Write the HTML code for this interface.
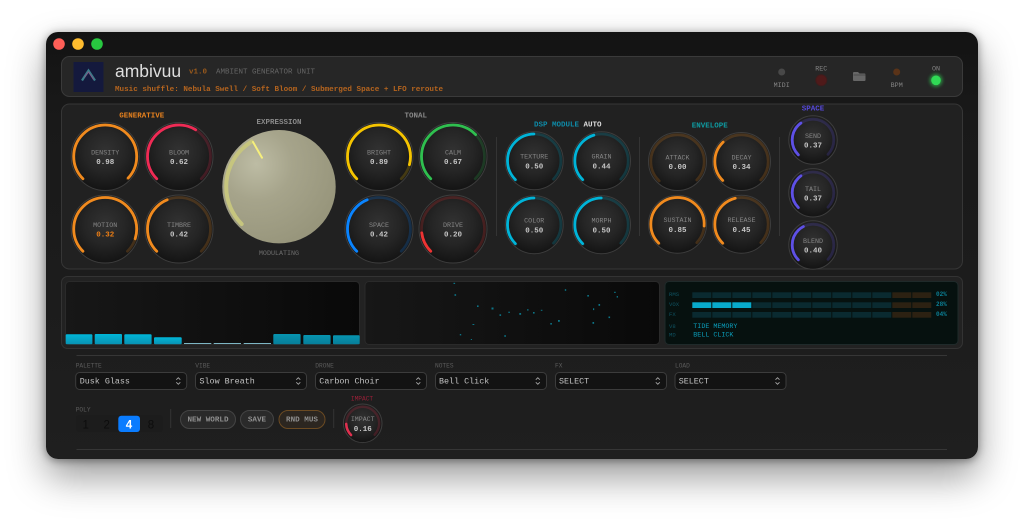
<!DOCTYPE html>
<html><head><meta charset="utf-8"><title>ambivuu</title>
<style>
html,body{margin:0;padding:0;background:#fff;width:1024px;height:520px;overflow:hidden}
#w{position:absolute;left:46px;top:32px;width:932px;height:427px;border-radius:12px;background:linear-gradient(#131313,#191919 20%,#1f1f1f);box-shadow:0 18px 38px rgba(0,0,0,.4),0 2px 8px rgba(0,0,0,.3),0 0 12px rgba(0,0,0,.12)}
svg{position:absolute;left:0;top:0;filter:blur(.35px)}
text{font-family:"Liberation Mono",monospace}
.l{font-size:6.7px;fill:#858585;text-anchor:middle}
.v{font-size:7.5px;fill:#c6c6c6;text-anchor:middle;font-weight:bold}
.h{font-size:7.5px;text-anchor:middle;font-weight:bold}
.t{fill:none;stroke-width:2.8;opacity:.2;stroke-dasharray:270 90;transform:rotate(135deg);stroke-linecap:round}
.a{fill:none;stroke-width:2.8;stroke-linecap:round;transform:rotate(135deg)}
.d{fill:url(#kg);stroke:#3d3d3d;stroke-width:1}
.sl{font-size:6.2px;fill:#5c5c5c}
.s{fill:#131313;stroke:#3c3c3c;stroke-width:1}
.st{font-size:8.4px;fill:#c4c4c4}
.c{fill:none;stroke:#a8a8a8;stroke-width:.9}
.sg{fill:#0a2a30}.so{fill:#2c2112}.sb{fill:#08aacb}
.ml{font-size:5.6px;fill:#0f5362}
.mp{font-size:6px;fill:#0b7f95;font-weight:bold}
.b{fill:#2a2a2a;stroke:#444;stroke-width:1}
.bt{font-size:7.6px;fill:#909090;text-anchor:middle;font-weight:bold}
.n{font-family:"Liberation Sans",sans-serif;font-size:11.5px;fill:#0d0d0d;text-anchor:middle}
.dot{fill:#0c7486}
</style></head><body>
<div id="w"></div>
<svg width="1024" height="520" viewBox="0 0 1024 520" xmlns="http://www.w3.org/2000/svg">
<defs>
<radialGradient id="kg" cx=".5" cy=".42" r=".56"><stop offset="0" stop-color="#323232"/><stop offset=".55" stop-color="#252525"/><stop offset="1" stop-color="#151515"/></radialGradient>
<radialGradient id="bk" cx=".3" cy=".3" r=".8"><stop offset="0" stop-color="#bdbca4"/><stop offset=".4" stop-color="#a6a48b"/><stop offset="1" stop-color="#96947a"/></radialGradient>
<linearGradient id="vg" x1="0" x2="1"><stop offset="0" stop-color="#171717"/><stop offset="1" stop-color="#090909"/></linearGradient>
<linearGradient id="bar" x1="0" x2="0" y1="0" y2="1"><stop offset="0" stop-color="#00b6d8"/><stop offset="1" stop-color="#0992b2"/></linearGradient>
<linearGradient id="bar2" x1="0" x2="0" y1="0" y2="1"><stop offset="0" stop-color="#0794b0"/><stop offset="1" stop-color="#077e99"/></linearGradient>
<filter id="gl" x="-100%" y="-100%" width="300%" height="300%"><feGaussianBlur stdDeviation="1.6"/></filter>
</defs>

<!-- traffic lights -->
<circle cx="59" cy="44" r="5.8" fill="#ff5f57"/><circle cx="78" cy="44" r="5.8" fill="#febc2e"/><circle cx="97" cy="44" r="5.8" fill="#28c840"/>

<!-- header -->
<rect x="61.5" y="56.5" width="901" height="40" rx="8" fill="#262626" stroke="#3a3a3a"/>
<rect x="73.5" y="62" width="30" height="30" fill="#14193d"/>
<path d="M82 80.5L88.5 70.5L95 80.5" fill="none" stroke="#3b7d8a" stroke-width="2.2"/>
<path d="M84.5 77.5L88.5 72L93.5 79.5" fill="none" stroke="#7f5a86" stroke-width="1"/>
<text x="115" y="77" style="font-family:'Liberation Sans',sans-serif;font-size:17.5px" fill="#dedede">ambivuu</text>
<text x="189" y="73.5" font-size="7.5" font-weight="bold" fill="#9a5a1c">v1.0</text>
<text x="216" y="73.5" font-size="7.5" fill="#666">AMBIENT GENERATOR UNIT</text>
<text x="115" y="91" font-size="7.6" font-weight="bold" fill="#b5641e">Music shuffle: Nebula Swell / Soft Bloom / Submerged Space + LFO reroute</text>
<circle cx="781.7" cy="72" r="3.5" fill="#484848"/><text class="l" x="781.7" y="87">MIDI</text>
<text class="l" x="821.3" y="70.5">REC</text><circle cx="821.3" cy="80.3" r="5.5" fill="#4f1a1a" stroke="#3f1c1c"/>
<path d="M853 73a1 1 0 0 1 1-1h4l1.5 1.5h5a1 1 0 0 1 1 1V80a1 1 0 0 1-1 1H854a1 1 0 0 1-1-1z" fill="#666"/><path d="M853.5 75h12" stroke="#3e3e3e" stroke-width=".7"/>
<circle cx="896.7" cy="72" r="3.5" fill="#5a3318"/><text class="l" x="896.7" y="87">BPM</text>
<text class="l" x="936" y="70.5">ON</text><circle cx="936" cy="80.3" r="6.5" fill="#2fdc55" opacity=".55" filter="url(#gl)"/><circle cx="936" cy="80.3" r="4.8" fill="#30d955"/>

<!-- main panel -->
<rect x="61.5" y="104" width="901" height="165" rx="8" fill="#212121" stroke="#363636"/>
<text class="h" x="141.7" y="117.5" fill="#e8821e">GENERATIVE</text>
<text class="h" x="279" y="124" fill="#8a8a8a">EXPRESSION</text>
<text class="l" x="279" y="255" style="fill:#6d6d6d">MODULATING</text>
<text class="h" x="415.8" y="117.5" fill="#888">TONAL</text>
<text x="534" y="126.5" font-size="7.5" font-weight="bold" fill="#0e8ba8">DSP MODULE <tspan fill="#dcdcdc">AUTO</tspan></text>
<text class="h" x="709.7" y="127.5" fill="#0e9aa0">ENVELOPE</text>
<text class="h" x="813" y="110.7" fill="#5548d8">SPACE</text>
<path d="M496.5 137V236M639.5 137V236M779.5 137V236" stroke="#343434"/>

<!-- generative -->
<g transform="translate(105.2,156.5)" stroke="#f08a1e"><circle class="d" r="34"/><circle class="t" r="31.5" pathLength="360" stroke="#f08a1e"/><circle class="a" r="31.5" pathLength="360" stroke-dasharray="268 360"/><text class="l" y="-2.2" stroke="none">DENSITY</text><text class="v" y="7.6" stroke="none">0.98</text></g>
<g transform="translate(179,156.5)" stroke="#ef2b55"><circle class="d" r="34"/><circle class="t" r="31.5" pathLength="360" stroke="#ef2b55"/><circle class="a" r="31.5" pathLength="360" stroke-dasharray="167 360"/><text class="l" y="-2.2" stroke="none">BLOOM</text><text class="v" y="7.6" stroke="none">0.62</text></g>
<g transform="translate(105.2,229)" stroke="#f08a1e"><circle class="d" r="34"/><circle class="t" r="31.5" pathLength="360" stroke="#f08a1e"/><circle class="a" r="31.5" pathLength="360" stroke-dasharray="243 360"/><text class="l" y="-2.2" stroke="none">MOTION</text><text class="v" y="7.6" stroke="none" style="fill:#ef7f14">0.32</text></g>
<g transform="translate(179,229)" stroke="#f08a1e"><circle class="d" r="34"/><circle class="t" r="31.5" pathLength="360" stroke="#f08a1e"/><circle class="a" r="31.5" pathLength="360" stroke-dasharray="113 360"/><text class="l" y="-2.2" stroke="none">TIMBRE</text><text class="v" y="7.6" stroke="none">0.42</text></g>

<!-- expression -->
<circle cx="279" cy="186.7" r="56.7" fill="url(#bk)"/>
<circle cx="279" cy="186.7" r="52.8" fill="none" stroke="#c6c57e" stroke-width="4" pathLength="360" stroke-dasharray="104 360" stroke-linecap="round" transform="rotate(135 279 186.7)"/>
<path d="M253 142L262 157.7" stroke="#f6ef7c" stroke-width="2" stroke-linecap="round"/>

<!-- tonal -->
<g transform="translate(379,156.5)" stroke="#f5c400"><circle class="d" r="34"/><circle class="t" r="31.5" pathLength="360" stroke="#f5c400"/><circle class="a" r="31.5" pathLength="360" stroke-dasharray="240 360"/><text class="l" y="-2.2" stroke="none">BRIGHT</text><text class="v" y="7.6" stroke="none">0.89</text></g>
<g transform="translate(453,156.5)" stroke="#2fbf4f"><circle class="d" r="34"/><circle class="t" r="31.5" pathLength="360" stroke="#2fbf4f"/><circle class="a" r="31.5" pathLength="360" stroke-dasharray="181 360"/><text class="l" y="-2.2" stroke="none">CALM</text><text class="v" y="7.6" stroke="none">0.67</text></g>
<g transform="translate(379,229)" stroke="#0a84ff"><circle class="d" r="34"/><circle class="t" r="31.5" pathLength="360" stroke="#0a84ff"/><circle class="a" r="31.5" pathLength="360" stroke-dasharray="113 360"/><text class="l" y="-2.2" stroke="none">SPACE</text><text class="v" y="7.6" stroke="none">0.42</text></g>
<g transform="translate(453,229)" stroke="#ee3333"><circle class="d" r="34"/><circle class="t" r="31.5" pathLength="360" stroke="#ee3333"/><circle class="a" r="31.5" pathLength="360" stroke-dasharray="38 360"/><text class="l" y="-2.2" stroke="none">DRIVE</text><text class="v" y="7.6" stroke="none">0.20</text></g>

<!-- dsp -->
<g transform="translate(534.2,160.7)" stroke="#00b4d8"><circle class="d" r="29"/><circle class="t" r="26.7" pathLength="360" stroke="#00b4d8"/><circle class="a" r="26.7" pathLength="360" stroke-dasharray="135 360"/><text class="l" y="-2" stroke="none">TEXTURE</text><text class="v" y="7.6" stroke="none">0.50</text></g>
<g transform="translate(601.5,160.7)" stroke="#00b4d8"><circle class="d" r="29"/><circle class="t" r="26.7" pathLength="360" stroke="#00b4d8"/><circle class="a" r="26.7" pathLength="360" stroke-dasharray="119 360"/><text class="l" y="-2" stroke="none">GRAIN</text><text class="v" y="7.6" stroke="none">0.44</text></g>
<g transform="translate(534.2,224.7)" stroke="#00b4d8"><circle class="d" r="29"/><circle class="t" r="26.7" pathLength="360" stroke="#00b4d8"/><circle class="a" r="26.7" pathLength="360" stroke-dasharray="135 360"/><text class="l" y="-2" stroke="none">COLOR</text><text class="v" y="7.6" stroke="none">0.50</text></g>
<g transform="translate(601.5,224.7)" stroke="#00b4d8"><circle class="d" r="29"/><circle class="t" r="26.7" pathLength="360" stroke="#00b4d8"/><circle class="a" r="26.7" pathLength="360" stroke-dasharray="135 360"/><text class="l" y="-2" stroke="none">MORPH</text><text class="v" y="7.6" stroke="none">0.50</text></g>

<!-- envelope -->
<g transform="translate(677.5,161.5)" stroke="#f08a1e"><circle class="d" r="29"/><circle class="t" r="26.7" pathLength="360" stroke="#f08a1e"/><text class="l" y="-2" stroke="none">ATTACK</text><text class="v" y="7.6" stroke="none">0.00</text></g>
<g transform="translate(741.5,161.5)" stroke="#f08a1e"><circle class="d" r="29"/><circle class="t" r="26.7" pathLength="360" stroke="#f08a1e"/><circle class="a" r="26.7" pathLength="360" stroke-dasharray="92 360"/><text class="l" y="-2" stroke="none">DECAY</text><text class="v" y="7.6" stroke="none">0.34</text></g>
<g transform="translate(677.5,224.2)" stroke="#f08a1e"><circle class="d" r="29"/><circle class="t" r="26.7" pathLength="360" stroke="#f08a1e"/><circle class="a" r="26.7" pathLength="360" stroke-dasharray="230 360"/><text class="l" y="-2" stroke="none">SUSTAIN</text><text class="v" y="7.6" stroke="none">0.85</text></g>
<g transform="translate(741.5,224.2)" stroke="#f08a1e"><circle class="d" r="29"/><circle class="t" r="26.7" pathLength="360" stroke="#f08a1e"/><circle class="a" r="26.7" pathLength="360" stroke-dasharray="122 360"/><text class="l" y="-2" stroke="none">RELEASE</text><text class="v" y="7.6" stroke="none">0.45</text></g>

<!-- space -->
<g transform="translate(813,140)" stroke="#5e50e6"><circle class="d" r="24.2"/><circle class="t" r="20.8" pathLength="360" stroke="#5e50e6"/><circle class="a" r="20.8" pathLength="360" stroke-dasharray="100 360"/><text class="l" y="-2" stroke="none">SEND</text><text class="v" y="7.6" stroke="none">0.37</text></g>
<g transform="translate(813,192.8)" stroke="#5e50e6"><circle class="d" r="24.2"/><circle class="t" r="20.8" pathLength="360" stroke="#5e50e6"/><circle class="a" r="20.8" pathLength="360" stroke-dasharray="100 360"/><text class="l" y="-2" stroke="none">TAIL</text><text class="v" y="7.6" stroke="none">0.37</text></g>
<g transform="translate(813,245)" stroke="#5e50e6"><circle class="d" r="24.2"/><circle class="t" r="20.8" pathLength="360" stroke="#5e50e6"/><circle class="a" r="20.8" pathLength="360" stroke-dasharray="108 360"/><text class="l" y="-2" stroke="none">BLEND</text><text class="v" y="7.6" stroke="none">0.40</text></g>

<!-- viz frame -->
<rect x="61.5" y="276.5" width="901" height="72" rx="6" fill="#222" stroke="#333"/>
<rect x="65.5" y="281.5" width="294" height="63" rx="4" fill="url(#vg)" stroke="#2a2a2a"/>
<g fill="url(#bar)"><rect x="65.7" y="334.3" width="26.7" height="10" rx="1"/><rect x="94.7" y="334" width="27.3" height="10.3" rx="1"/><rect x="124.3" y="334.3" width="27.3" height="10" rx="1"/><rect x="154" y="337.3" width="27.7" height="7" rx="1"/></g>
<g fill="#7db6c4"><rect x="184" y="343" width="27.3" height="1"/><rect x="213.7" y="343" width="27.3" height="1"/><rect x="243.7" y="343" width="27.3" height="1"/></g>
<g fill="url(#bar2)"><rect x="273.3" y="334" width="27.3" height="10.3" rx="1"/><rect x="303.3" y="335" width="27.3" height="9.3" rx="1"/><rect x="333" y="335.3" width="26.7" height="9" rx="1"/></g>

<rect x="365" y="281.5" width="294.5" height="63" rx="4" fill="url(#vg)" stroke="#2a2a2a"/>
<g class="dot">
<rect x="453.5" y="282.8" width="1.6" height="1.2"/><rect x="454.5" y="294.2" width="1.6" height="1.6"/><rect x="477" y="305.4" width="1.6" height="1.6"/><rect x="491.5" y="307.5" width="2" height="2"/><rect x="499.5" y="314.3" width="1.6" height="1.6"/><rect x="508.3" y="311.7" width="1.6" height="1.2"/><rect x="519.3" y="313" width="1.8" height="1.8"/><rect x="527" y="309.3" width="1.6" height="1.2"/><rect x="533" y="312" width="1.6" height="1.6"/><rect x="540.8" y="309.8" width="1.6" height="1"/><rect x="550.3" y="323" width="1.6" height="1.6"/><rect x="558" y="320" width="1.8" height="1.8"/><rect x="564.8" y="289.2" width="1.4" height="1.6"/><rect x="587.3" y="295" width="1.6" height="1.6"/><rect x="593" y="308.3" width="1.2" height="1.8"/><rect x="598.5" y="304" width="1.6" height="1.8"/><rect x="608.5" y="316.5" width="1.6" height="1.6"/><rect x="614" y="291.8" width="1.8" height="1"/><rect x="616.7" y="296" width="1.2" height="1.6"/><rect x="592.5" y="322" width="1.6" height="1.8"/><rect x="472.5" y="324" width="1.8" height="1"/><rect x="459.8" y="334" width="1.4" height="1.4"/><rect x="470.8" y="339" width="1.2" height="1"/><rect x="504.3" y="335.2" width="1.6" height="1.6"/>
</g>

<rect x="665" y="281.5" width="293" height="63" rx="4" fill="#06110f" stroke="#1f2a2a"/>
<text class="ml" x="669" y="296">RMS</text><text class="ml" x="669" y="306">VOX</text><text class="ml" x="669" y="316">FX</text>
<g class="sg">
<rect x="692.3" y="292.3" width="19" height="5.7"/><rect x="712.3" y="292.3" width="19" height="5.7"/><rect x="732.3" y="292.3" width="19" height="5.7"/><rect x="752.3" y="292.3" width="19" height="5.7"/><rect x="772.3" y="292.3" width="19" height="5.7"/><rect x="792.3" y="292.3" width="19" height="5.7"/><rect x="812.3" y="292.3" width="19" height="5.7"/><rect x="832.3" y="292.3" width="19" height="5.7"/><rect x="852.3" y="292.3" width="19" height="5.7"/><rect x="872.3" y="292.3" width="19" height="5.7"/>
<rect x="752.3" y="302.3" width="19" height="5.7"/><rect x="772.3" y="302.3" width="19" height="5.7"/><rect x="792.3" y="302.3" width="19" height="5.7"/><rect x="812.3" y="302.3" width="19" height="5.7"/><rect x="832.3" y="302.3" width="19" height="5.7"/><rect x="852.3" y="302.3" width="19" height="5.7"/><rect x="872.3" y="302.3" width="19" height="5.7"/>
<rect x="692.3" y="312" width="19" height="5.7"/><rect x="712.3" y="312" width="19" height="5.7"/><rect x="732.3" y="312" width="19" height="5.7"/><rect x="752.3" y="312" width="19" height="5.7"/><rect x="772.3" y="312" width="19" height="5.7"/><rect x="792.3" y="312" width="19" height="5.7"/><rect x="812.3" y="312" width="19" height="5.7"/><rect x="832.3" y="312" width="19" height="5.7"/><rect x="852.3" y="312" width="19" height="5.7"/><rect x="872.3" y="312" width="19" height="5.7"/>
</g>
<g class="so"><rect x="892.3" y="292.3" width="19" height="5.7"/><rect x="912.3" y="292.3" width="19" height="5.7"/><rect x="892.3" y="302.3" width="19" height="5.7"/><rect x="912.3" y="302.3" width="19" height="5.7"/><rect x="892.3" y="312" width="19" height="5.7"/><rect x="912.3" y="312" width="19" height="5.7"/></g>
<g class="sb"><rect x="692.3" y="302.3" width="19" height="5.7"/><rect x="712.3" y="302.3" width="19" height="5.7"/><rect x="732.3" y="302.3" width="19" height="5.7"/></g>
<text class="mp" x="936" y="296">02%</text><text class="mp" x="936" y="306">28%</text><text class="mp" x="936" y="316">04%</text>
<text class="ml" x="669" y="328">V8</text><text class="ml" x="669" y="336.3">MD</text>
<text x="693.3" y="328" font-size="6.7" fill="#0a9fbc">TIDE MEMORY</text>
<text x="693.3" y="336.3" font-size="6.7" fill="#0a9fbc">BELL CLICK</text>

<!-- controls -->
<path d="M76.5 355.5H947M76.5 449.5H947" stroke="#363636"/>
<text class="sl" x="75.7" y="367.5">PALETTE</text><text class="sl" x="195.3" y="367.5">VIBE</text><text class="sl" x="315.3" y="367.5">DRONE</text><text class="sl" x="435" y="367.5">NOTES</text><text class="sl" x="555" y="367.5">FX</text><text class="sl" x="675" y="367.5">LOAD</text>
<rect class="s" x="75.7" y="372.5" width="111" height="17" rx="4"/><rect class="s" x="195.5" y="372.5" width="111" height="17" rx="4"/><rect class="s" x="315.5" y="372.5" width="111" height="17" rx="4"/><rect class="s" x="435.5" y="372.5" width="111" height="17" rx="4"/><rect class="s" x="555.5" y="372.5" width="111" height="17" rx="4"/><rect class="s" x="675" y="372.5" width="111" height="17" rx="4"/>
<text class="st" x="79.7" y="383.5">Dusk Glass</text><text class="st" x="199.5" y="383.5">Slow Breath</text><text class="st" x="319.3" y="383.5">Carbon Choir</text><text class="st" x="439" y="383.5">Bell Click</text><text class="st" x="559" y="383.5">SELECT</text><text class="st" x="678.7" y="383.5">SELECT</text>
<path class="c" d="M176.3 379.7l2-2 2 2M176.3 382.3l2 2 2-2M296.3 379.7l2-2 2 2M296.3 382.3l2 2 2-2M416.3 379.7l2-2 2 2M416.3 382.3l2 2 2-2M535.8 379.7l2-2 2 2M535.8 382.3l2 2 2-2M655.8 379.7l2-2 2 2M655.8 382.3l2 2 2-2M775.5 379.7l2-2 2 2M775.5 382.3l2 2 2-2"/>

<text class="sl" x="75.7" y="411.5">POLY</text>
<rect x="76" y="415" width="87" height="17" rx="3" fill="#1c1c1c"/>
<rect x="118.3" y="415.7" width="21.7" height="16.3" rx="3" fill="#0a7cff"/>
<text class="n" x="85.7" y="428.3">1</text><text class="n" x="106.7" y="428.3">2</text><text class="n" x="129" y="428.3" style="fill:#fff;font-weight:bold">4</text><text class="n" x="151" y="428.3">8</text>
<path d="M170.7 409V428M333.7 409V428" stroke="#343434"/>
<rect class="b" x="180.5" y="410.5" width="55" height="18" rx="9"/><text class="bt" x="208" y="421.5">NEW WORLD</text>
<rect class="b" x="240.5" y="410.5" width="33" height="18" rx="9"/><text class="bt" x="257" y="421.5">SAVE</text>
<rect class="b" x="279" y="410.5" width="46" height="18" rx="9" style="fill:#2c2620;stroke:#6b4a22"/><text class="bt" x="302" y="421.5">RND MUS</text>
<text class="sl" x="362" y="400.5" text-anchor="middle" style="fill:#9a2038">IMPACT</text>
<g transform="translate(362.7,423.3)" stroke="#e0304f"><circle class="d" r="19.3"/><circle class="t" r="16.5" pathLength="360" stroke="#e0304f" style="stroke-width:2.5"/><circle class="a" r="16.5" pathLength="360" stroke-dasharray="43 360" style="stroke-width:2.5"/><text class="l" y="-2.3" stroke="none" style="font-size:6.6px">IMPACT</text><text class="v" y="7.6" stroke="none">0.16</text></g>
</svg>
</body></html>
